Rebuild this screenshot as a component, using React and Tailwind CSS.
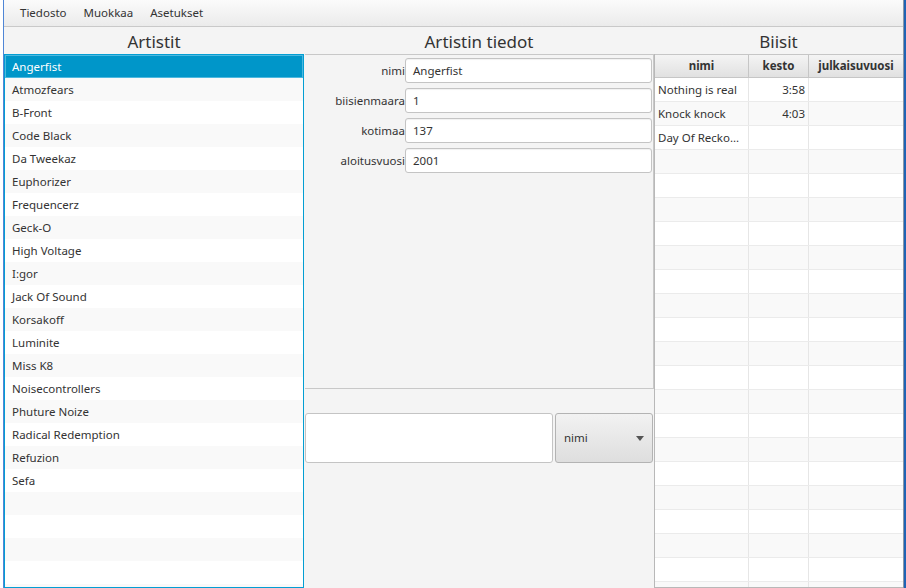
import React from 'react'

const ARTISTS = [
  'Angerfist', 'Atmozfears', 'B-Front', 'Code Black', 'Da Tweekaz', 'Euphorizer',
  'Frequencerz', 'Geck-O', 'High Voltage', 'I:gor', 'Jack Of Sound', 'Korsakoff',
  'Luminite', 'Miss K8', 'Noisecontrollers', 'Phuture Noize', 'Radical Redemption',
  'Refuzion', 'Sefa',
]

const SONGS = [
  { name: 'Nothing is real', time: '3:58' },
  { name: 'Knock knock', time: '4:03' },
  { name: 'Day Of Recko...', time: '' },
]

const FIELDS = [
  ['nimi', 'Angerfist'],
  ['biisienmaara', '1'],
  ['kotimaa', '137'],
  ['aloitusvuosi', '2001'],
]

const font = { fontFamily: '"Noto Sans", "Open Sans", sans-serif' }

function Header({ children }) {
  return (
    <div className="h-[27px] flex items-center justify-center text-[17px] text-[#333] leading-none pt-[1px]">
      {children}
    </div>
  )
}

export default function App() {
  const listRows = Array.from({ length: 24 }, (_, i) => ARTISTS[i] ?? '')
  const tableRows = Array.from({ length: 22 }, (_, i) => SONGS[i] ?? null)

  return (
    <div className="w-[906px] h-[588px] flex overflow-hidden bg-[#f4f4f4] text-[#333]" style={font}>
      {/* desktop sliver + window border */}
      <div className="w-[4px] h-full bg-white border-r border-[#4f86d6]" />

      <div className="w-[899px] h-full flex flex-col">
        {/* menu bar */}
        <div className="h-[27px] flex items-center gap-[17px] pl-[16px] text-[11.5px] bg-gradient-to-b from-[#fbfbfb] to-[#ebebeb] border-b border-[#c9c9c9]">
          <span>Tiedosto</span>
          <span>Muokkaa</span>
          <span>Asetukset</span>
        </div>

        <div className="flex flex-1 min-h-0">
          {/* Artistit */}
          <div className="w-[300px] flex flex-col">
            <Header>Artistit</Header>
            <div className="flex-1 min-h-0 overflow-hidden border border-[#039ed3] bg-white">
              {listRows.map((name, i) => (
                <div
                  key={i}
                  className={
                    'h-[23px] flex items-center pl-[7px] text-[11.5px] ' +
                    (i === 0
                      ? 'bg-[#0096c9] text-white ring-1 ring-inset ring-[#4db8df]'
                      : i % 2 === 1
                        ? 'bg-[#f9f9f9]'
                        : 'bg-white')
                  }
                >
                  {name}
                </div>
              ))}
            </div>
          </div>

          {/* Artistin tiedot */}
          <div className="w-[350px] flex flex-col">
            <Header>Artistin tiedot</Header>
            <div className="h-[334px] border-t border-r border-[#c8c8c8] ml-[1px] pt-[3px] flex flex-col gap-[5px]">
              {FIELDS.map(([label, value]) => (
                <div key={label} className="flex items-center">
                  <span className="w-[100px] text-right text-[11.5px]">{label}</span>
                  <div className="w-[247px] h-[25px] flex items-center px-[7px] text-[11.5px] bg-white border border-[#c4c4c4] rounded-[3px] shadow-[inset_0_1px_1px_rgba(0,0,0,0.06)]">
                    {value}
                  </div>
                </div>
              ))}
            </div>
            <div className="flex-1 border-t border-[#c8c8c8] ml-[1px] pt-[24px]">
              <div className="flex gap-[2px] pr-[1px]">
                <div className="w-[248px] h-[50px] bg-white border border-[#c4c4c4] rounded-[3px]" />
                <div className="flex-1 h-[50px] flex items-center justify-between pl-[8px] pr-[8px] text-[11.5px] bg-gradient-to-b from-[#f2f2f2] to-[#dedede] border border-[#b3b3b3] rounded-[3px]">
                  <span>nimi</span>
                  <svg width="8" height="5" viewBox="0 0 8 5">
                    <path d="M0 0 L8 0 L4 5 Z" fill="#555" />
                  </svg>
                </div>
              </div>
            </div>
          </div>

          {/* Biisit */}
          <div className="w-[249px] flex flex-col">
            <Header>Biisit</Header>
            <div className="flex-1 min-h-0 overflow-hidden border-l border-b border-[#b8b8b8] bg-white">
              <div className="flex h-[24px] text-[11.5px] font-bold border-y border-[#c6c6c6] bg-gradient-to-b from-[#f4f4f4] to-[#e1e1e1]">
                <div className="w-[94px] flex items-center justify-center border-r border-[#c6c6c6]">nimi</div>
                <div className="w-[60px] flex items-center justify-center border-r border-[#c6c6c6]">kesto</div>
                <div className="flex-1 flex items-center justify-center">julkaisuvuosi</div>
              </div>
              {tableRows.map((row, i) => (
                <div
                  key={i}
                  className={'flex h-[24px] text-[11.5px] border-b border-[#ebebeb] ' + (i % 2 === 1 ? 'bg-[#f9f9f9]' : 'bg-white')}
                >
                  <div className="w-[94px] flex items-center pl-[3px] border-r border-[#e6e6e6] whitespace-nowrap overflow-hidden">
                    {row?.name}
                  </div>
                  <div className="w-[60px] flex items-center justify-end pr-[3px] border-r border-[#e6e6e6]">
                    {row?.time}
                  </div>
                  <div className="flex-1" />
                </div>
              ))}
            </div>
          </div>
        </div>
      </div>

      {/* window border right */}
      <div className="w-[3px] h-full bg-[#1f63b4] border-l border-[#8a97a8]" />
    </div>
  )
}
